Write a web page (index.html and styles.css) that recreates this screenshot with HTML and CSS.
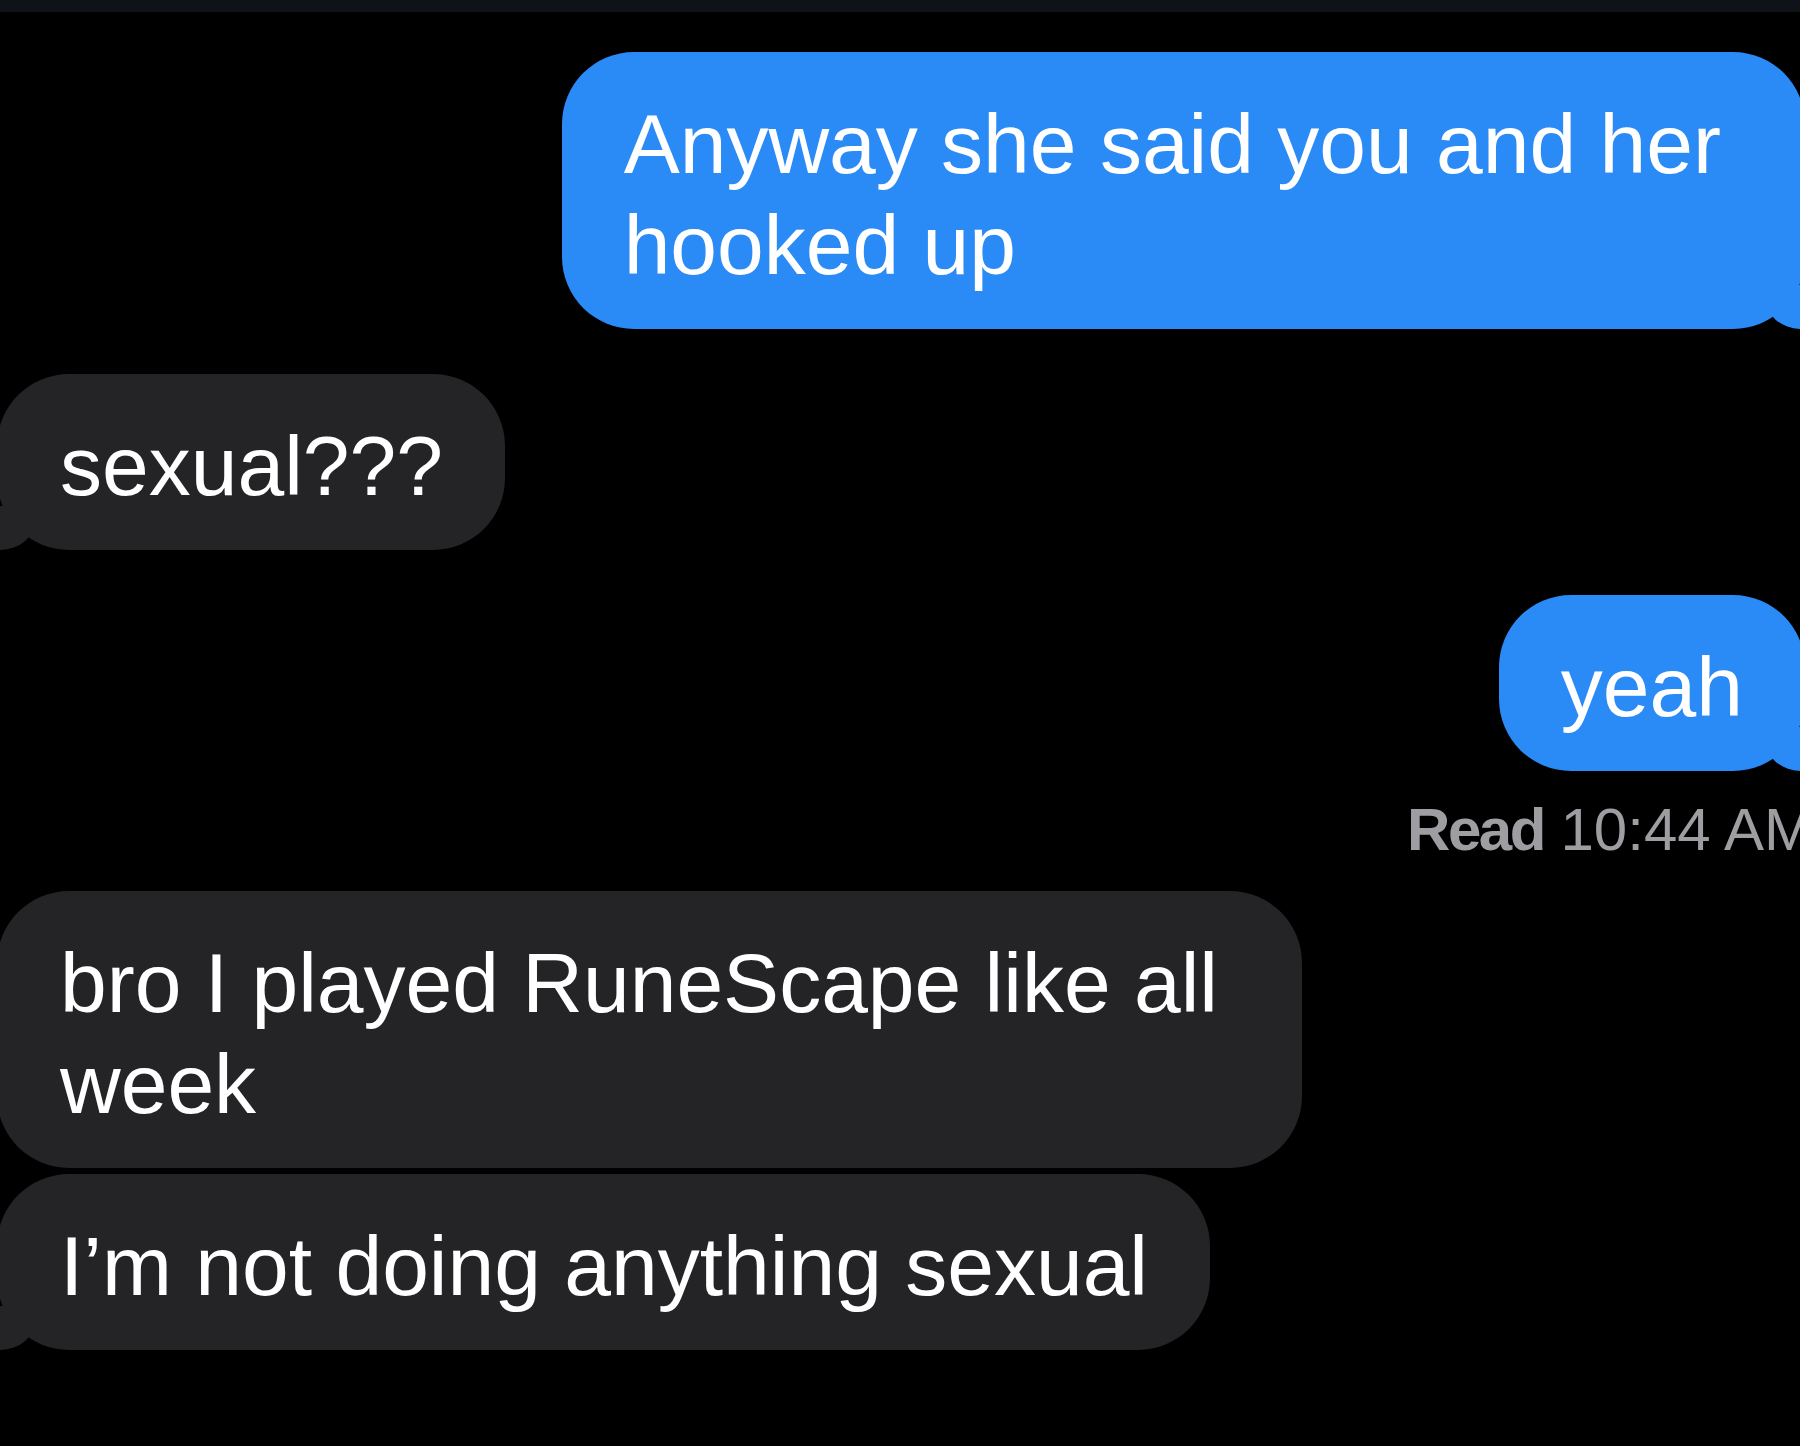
FILE: index.html
```html
<!DOCTYPE html>
<html lang="en">
<head>
  <meta charset="UTF-8" />
  <meta name="viewport" content="width=device-width, initial-scale=1.0"/>
  <title>Messages</title>
  <link rel="stylesheet" href="styles.css">
</head>
<body>

  <div class="topbar"></div>

  <div class="thread">
    <div class="bubble sent wrapped">Anyway she said you and her<br>hooked up</div>

    <div class="bubble received gap-big">sexual???</div>

    <div class="bubble sent gap-big">yeah</div>
    <div class="receipt"><b>Read</b> 10:44 AM</div>

    <div class="bubble received wrapped gap-receipt no-tail">bro I played RuneScape like all<br>week</div>
    <div class="bubble received gap-small">I’m not doing anything sexual</div>
  </div>

</body>
</html>
```

FILE: styles.css
```css
* {
  box-sizing: border-box;
}

:root {
  --bg: #000000;
  --blue: #2a8af6;
  --grey: #242427;
  --receipt: #9e9ea2;
}

body {
  margin: 0;
  height: 1446px;
  overflow: hidden;
  background-color: var(--bg);
  font-family: 'Liberation Sans', Arial, sans-serif;
  color: #fff;
}

.topbar {
  height: 12px;
  background-color: #0f1218;
}

.thread {
  display: flex;
  flex-direction: column;
  padding-top: 40px;
}

.bubble {
  position: relative;
  font-size: 84px;
  line-height: 101px;
  padding: 42px 62px 33px 62px;
  border-radius: 72px;
  white-space: nowrap;
}

.sent {
  align-self: flex-end;
  margin-right: -5px;
  background-color: var(--blue);
}

.received {
  align-self: flex-start;
  margin-left: -3px;
  padding-left: 63px;
  background-color: var(--grey);
}

/* wrapped bubbles keep some slack on the right like the real app */
.wrapped {
  padding-right: 84px;
}

.gap-big {
  margin-top: 45px;
}

.gap-small {
  margin-top: 6px;
}

.gap-receipt {
  margin-top: 29px;
}

/* tails */
.sent::before,
.received::before {
  content: "";
  position: absolute;
  bottom: 0;
  height: 44px;
  width: 44px;
}

.sent::before {
  right: -4px;
  background-color: var(--blue);
  border-bottom-left-radius: 36px 32px;
}

.received::before {
  left: -5px;
  background-color: var(--grey);
  border-bottom-right-radius: 36px 32px;
}

.sent::after,
.received::after {
  content: "";
  position: absolute;
  bottom: 0;
  height: 44px;
  width: 30px;
  background-color: var(--bg);
}

.sent::after {
  right: -30px;
  border-bottom-left-radius: 24px;
}

.received::after {
  left: -30px;
  border-bottom-right-radius: 24px;
}

.no-tail::before,
.no-tail::after {
  display: none;
}

.receipt {
  align-self: flex-end;
  margin-top: 27px;
  margin-right: -14px;
  font-size: 60px;
  line-height: 64px;
  color: var(--receipt);
  white-space: nowrap;
}

.receipt b {
  font-weight: bold;
  letter-spacing: -2.5px;
}
```
